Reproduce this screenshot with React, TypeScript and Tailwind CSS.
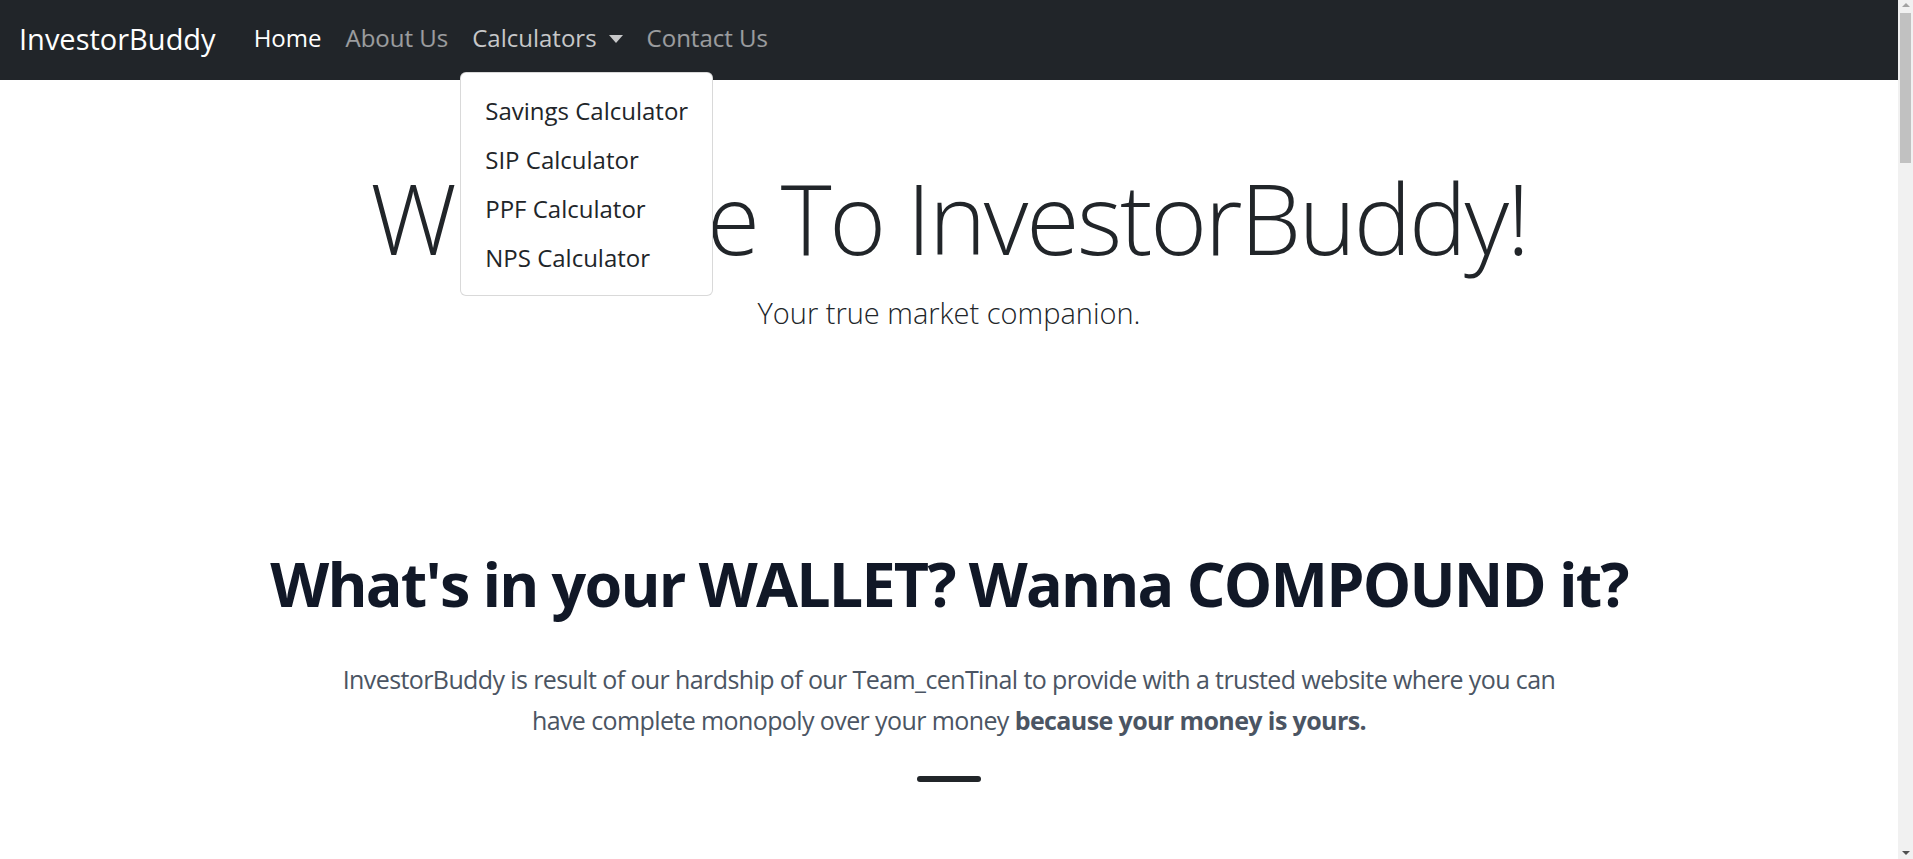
import { useState } from "react";

const calculators = ["Savings Calculator", "SIP Calculator", "PPF Calculator", "NPS Calculator"];

function Navbar() {
    const [open] = useState(true);
    return (
        <header className="relative z-20 bg-[#212529]">
            <nav className="h-[80px] flex items-center pl-[19px] pb-[4px]">
                <a href="#" className="text-white text-[29px] leading-none mr-[26px]">InvestorBuddy</a>

                <ul className="flex items-center text-[24px] leading-none">
                    <li><a href="#" className="block px-[12px] text-white">Home</a></li>
                    <li><a href="#" className="block px-[12px] text-white/55">About Us</a></li>
                    <li className="relative">
                        <a href="#" className="flex items-center px-[12px] text-white/75">
                            Calculators
                            <span className="ml-[12px] mt-[2px] border-x-[7px] border-t-[8px] border-x-transparent border-t-white/75" />
                        </a>
                        {/* dropdown menu, shown open */}
                        {open && (
                            <div className="absolute left-0 top-[46px] w-[253px] py-[13px] bg-white border border-black/15 rounded-[6px]">
                                {calculators.map((c) => (
                                    <a key={c} href="#" className="block px-[24px] py-[6px] text-[24px] leading-[37px] text-[#212529]">{c}</a>
                                ))}
                            </div>
                        )}
                    </li>
                    <li><a href="#" className="block px-[12px] text-white/55">Contact Us</a></li>
                </ul>
            </nav>
        </header>
    );
}

function Scrollbar() {
    return (
        <div className="fixed top-0 right-0 h-screen w-[15px] bg-[#f1f1f1] flex flex-col items-center">
            <span className="mt-[3px] border-x-[4px] border-b-[4px] border-x-transparent border-b-[#a3a3a3]" />
            <div className="mt-[6px] h-[150px] w-[11px] bg-[#c1c1c1]" />
            <span className="mt-auto mb-[4px] border-x-[4px] border-t-[4px] border-x-transparent border-t-[#505050]" />
        </div>
    );
}

export default function App() {
    return (
        <div className="min-h-[1200px] bg-white font-['Open_Sans','Noto_Sans',sans-serif]">
            <div className="mr-[15px]">
                <Navbar />

                {/* Hero */}
                <section className="pt-[79px] flex flex-col items-center text-[#212529]">
                    <h1 className="text-[97px] font-light leading-[1.2] tracking-[-2.3px]">Welcome To InvestorBuddy!</h1>
                    <p className="mt-[15px] text-[29px] font-light leading-[45px]">Your true market companion.</p>
                </section>

                {/* About */}
                <section className="pt-[212px] flex flex-col items-center text-center">
                    <h2 className="text-[61px] font-bold leading-[1.2] tracking-[-1.8px] text-[#111827]">What's in your WALLET? Wanna COMPOUND it?</h2>
                    <p className="mt-[38px] text-[25px] leading-[41px] tracking-[-0.6px] text-[#4b5563]">
                        InvestorBuddy is result of our hardship of our Team_cenTinal to provide with a trusted website where you can<br />
                        have complete monopoly over your money <strong className="font-bold">because your money is yours.</strong>
                    </p>
                    <div className="mt-[35px] w-[64px] h-[6px] rounded-full bg-[#212529]" />
                </section>
            </div>
            <Scrollbar />
        </div>
    );
}
